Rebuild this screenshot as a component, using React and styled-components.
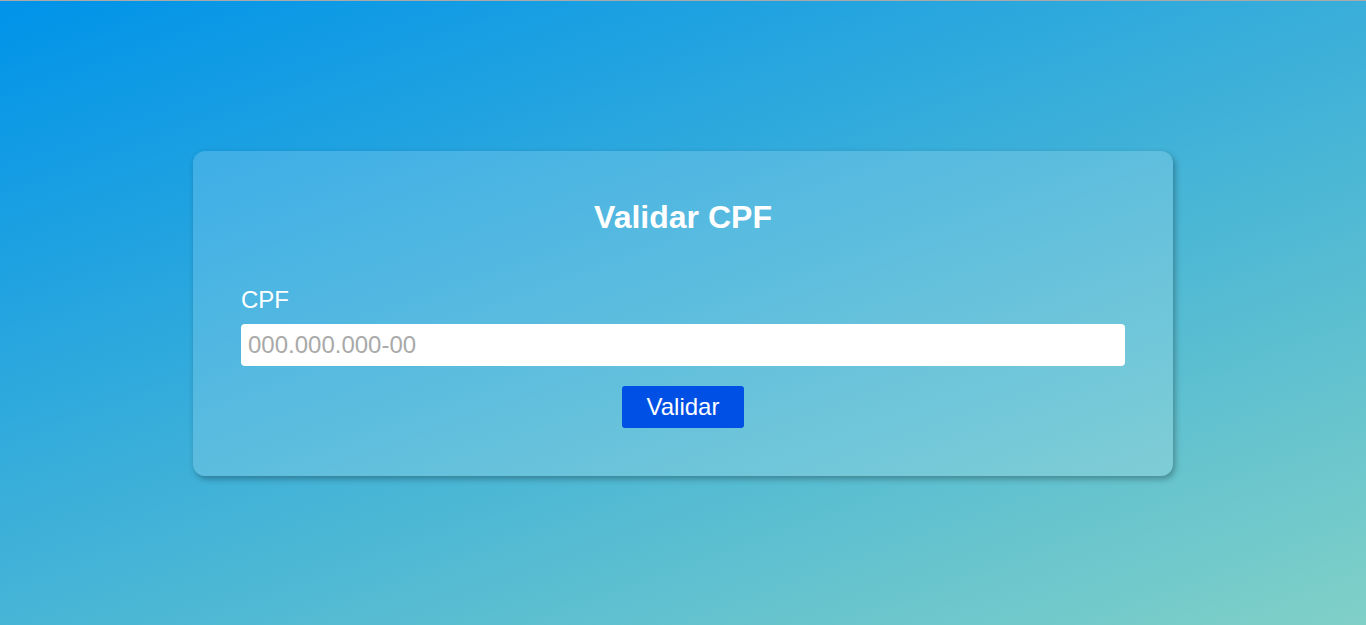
import React from 'react';
import styled, { createGlobalStyle } from 'styled-components';

const GlobalStyle = createGlobalStyle`
  * { box-sizing: border-box; }
  html, body { margin: 0; padding: 0; }
  body {
    font-family: "Liberation Sans", Arial, sans-serif;
  }
`;

const App = () => {
  return (
    <>
      <GlobalStyle />
      <Page>
        <Card>
          <Title>Validar CPF</Title>
          <Label htmlFor="cpf">CPF</Label>
          <Input id="cpf" placeholder="000.000.000-00" />
          <ButtonRow>
            <Button>Validar</Button>
          </ButtonRow>
        </Card>
      </Page>
    </>
  );
};

export default App;

const Page = styled.div`
  height: 625px;
  border-top: 1px solid #a9a9a9;
  background: linear-gradient(160deg, #0093e9 0%, #80d0c7 100%);
  display: flex;
  align-items: center;
  justify-content: center;
`;

const Card = styled.div`
  width: 980px;
  padding: 48px;
  border-radius: 12px;
  background: rgba(255, 255, 255, 0.16);
  box-shadow: 2px 3px 6px rgba(0, 0, 0, 0.3);
  display: flex;
  flex-direction: column;
`;

const Title = styled.h1`
  margin: 0 0 53px;
  font-size: 32px;
  line-height: 36px;
  font-weight: bold;
  color: #fff;
  text-align: center;
`;

const Label = styled.label`
  font-size: 24px;
  line-height: 24px;
  color: #fff;
  margin-bottom: 12px;
`;

const Input = styled.input`
  height: 42px;
  width: 100%;
  border: none;
  border-radius: 4px;
  padding: 0 7px;
  font-family: "Liberation Sans", Arial, sans-serif;
  font-size: 24px;
  color: #333;
  background: #fff;
  outline: none;

  &::placeholder {
    color: #a9a9a9;
  }
`;

const ButtonRow = styled.div`
  display: flex;
  justify-content: center;
  margin-top: 20px;
`;

const Button = styled.button`
  height: 42px;
  padding: 0 25px;
  border: none;
  border-radius: 3px;
  background: #0050e6;
  color: #fff;
  font-family: "Liberation Sans", Arial, sans-serif;
  font-size: 24px;
  cursor: pointer;
`;
